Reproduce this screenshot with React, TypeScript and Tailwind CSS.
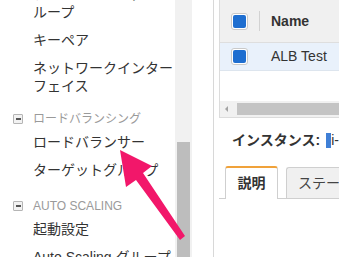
const font = { fontFamily: '"Liberation Sans", "Noto Sans CJK JP", sans-serif' };

const NavItem = ({ children }: { children: React.ReactNode }) => (
  <div className="pl-[33px] py-[5px] text-[14px] leading-[18px] text-[#333]">{children}</div>
);

const NavHeader = ({ label }: { label: string }) => (
  <div className="flex items-center gap-[10px] pl-[13px] text-[12px] leading-[18px] text-[#9a9a9a]">
    <span className="w-[10px] h-[10px] border border-[#b5b5b5] bg-[#f2f2f2] rounded-[1px] flex items-center justify-center">
      <span className="w-[5px] h-[2px] bg-[#555]" />
    </span>
    <span>{label}</span>
  </div>
);

const Check = () => (
  <span className="w-[17px] h-[17px] shrink-0 rounded-[3px] border border-[#c9c9c9] bg-white flex items-center justify-center">
    <span className="w-[13px] h-[13px] rounded-[2px] bg-[#1e6ed0]" />
  </span>
);

export default function App() {
  return (
    <div className="relative w-[339px] h-[257px] overflow-hidden flex bg-white" style={font}>
      {/* sidebar */}
      <div className="w-[175px] h-full overflow-hidden">
        <div className="-mt-[20px]">
          <NavItem>
            プレイスメントグ
            <br />
            ループ
          </NavItem>
          <NavItem>キーペア</NavItem>
          <NavItem>
            ネットワークインター
            <br />
            フェイス
          </NavItem>
          <div className="mt-[10px]">
            <NavHeader label="ロードバランシング" />
          </div>
          <NavItem>ロードバランサー</NavItem>
          <NavItem>ターゲットグループ</NavItem>
          <div className="mt-[13px]">
            <NavHeader label="AUTO SCALING" />
          </div>
          <NavItem>起動設定</NavItem>
          <NavItem>Auto Scaling グループ</NavItem>
        </div>
      </div>

      {/* sidebar scrollbar */}
      <div className="w-[17px] h-full bg-[#f1f1f1] flex flex-col pt-[142px] px-[2px]">
        <div className="flex-1 bg-[#bdbdbd]" />
      </div>

      <div className="w-[21px] h-full" />
      <div className="w-px h-full bg-[#d8d8d8]" />

      {/* main */}
      <div className="flex-1 h-full pl-[5px] flex flex-col min-w-0">
        <div className="border-l border-b border-[#dcdcdc]">
          <div className="h-[43px] bg-[#f0f0f0] border-b border-[#dedede] flex items-center pl-[11px]">
            <Check />
            <span className="w-px h-[20px] bg-[#d2d2d2] ml-[11px]" />
            <span className="ml-[11px] text-[14px] font-bold text-[#333]">Name</span>
          </div>
          <div className="h-[28px] bg-[#e9f1fb] border-b border-[#dde5ee] flex items-center pl-[11px]">
            <Check />
            <span className="ml-[23px] text-[14px] text-[#333]">ALB Test</span>
          </div>
          <div className="h-[30px]" />
          <div className="h-[16px] bg-[#f1f1f1] flex items-center pl-[5px] gap-[9px]">
            <span className="w-0 h-0 border-y-[3px] border-y-transparent border-r-[3px] border-r-[#a3a3a3]" />
            <span className="flex-1 h-[12px] bg-[#c4c4c4]" />
          </div>
        </div>

        <div className="mt-[12px] pl-[13px] flex items-center h-[20px] text-[14px] font-semibold text-[#333] whitespace-nowrap">
          <span>インスタンス:</span>
          <span className="ml-[6px] w-[6px] h-[15px] bg-[#3f7fd6]" />
          <span className="font-normal">i-</span>
        </div>

        <div className="mt-[16px] flex items-end border-b border-[#cfcfcf] h-[33px] whitespace-nowrap">
          <div className="ml-[6px] w-[53px] shrink-0 h-[33px] -mb-px bg-white border-t-2 border-t-[#f0a23a] border-x border-x-[#cfcfcf] rounded-t-[3px] flex items-center justify-center text-[14px] font-bold text-[#333]">
            説明
          </div>
          <div className="ml-[8px] h-[31px] flex-1 min-w-0 overflow-hidden bg-[#f0f0f0] border-t border-l border-[#cfcfcf] rounded-tl-[3px] flex items-center pl-[11px] text-[14px] text-[#444]">
            ステータスチェック
          </div>
        </div>
      </div>

      {/* pointer arrow overlay */}
      <svg className="absolute left-0 top-0 pointer-events-none" width="339" height="257" viewBox="0 0 339 257">
        <polygon
          points="120,150 152,166 143,173 185,236 180,240 136,180 126,187"
          fill="#f2176a"
        />
      </svg>
    </div>
  );
}
